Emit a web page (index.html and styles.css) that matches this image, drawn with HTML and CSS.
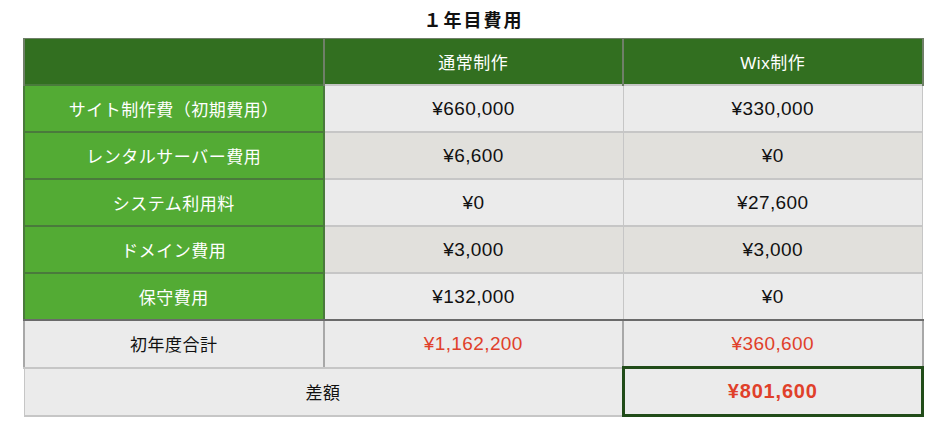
FILE: index.html
```html
<!DOCTYPE html>
<html lang="ja">
<head>
    <meta charset="UTF-8">
    <meta name="viewport" content="width=device-width, initial-scale=1.0">
    <title>1年目費用</title>
    <link rel="stylesheet" href="styles.css">
</head>
<body>
    <div class="container">
        <h2 class="title">１年目費用</h2>
        <table class="cost-table">
            <thead>
                <tr>
                    <th></th>
                    <th>通常制作</th>
                    <th>Wix制作</th>
                </tr>
            </thead>
            <tbody>
                <tr>
                    <th class="item">サイト制作費（初期費用）</th>
                    <td class="num">¥660,000</td>
                    <td class="num">¥330,000</td>
                </tr>
                <tr class="alt">
                    <th class="item">レンタルサーバー費用</th>
                    <td class="num">¥6,600</td>
                    <td class="num">¥0</td>
                </tr>
                <tr>
                    <th class="item">システム利用料</th>
                    <td class="num">¥0</td>
                    <td class="num">¥27,600</td>
                </tr>
                <tr class="alt">
                    <th class="item">ドメイン費用</th>
                    <td class="num">¥3,000</td>
                    <td class="num">¥3,000</td>
                </tr>
                <tr class="last-item">
                    <th class="item">保守費用</th>
                    <td class="num">¥132,000</td>
                    <td class="num">¥0</td>
                </tr>
                <tr class="total">
                    <td>初年度合計</td>
                    <td class="num red">¥1,162,200</td>
                    <td class="num red">¥360,600</td>
                </tr>
                <tr class="diff">
                    <td colspan="2">差額</td>
                    <td class="num highlight">¥801,600</td>
                </tr>
            </tbody>
        </table>
    </div>
</body>
</html>
```

FILE: styles.css
```css
body {
    font-family: "Liberation Sans", "Noto Sans CJK JP", sans-serif;
    background-color: #fff;
    color: #111;
    margin: 0;
    padding: 0;
}
.container {
    width: 901px;
    margin: 0 0 0 23px;
    padding-top: 8px;
}
.title {
    text-align: center;
    font-size: 18px;
    font-weight: bold;
    letter-spacing: 2px;
    line-height: 26px;
    margin: 0 0 4px 0;
}
.cost-table {
    width: 901px;
    border-collapse: collapse;
    table-layout: fixed;
    border: 1px solid #bcbcbc;
    font-size: 17px;
    letter-spacing: 0.5px;
}
.cost-table th,
.cost-table td {
    height: 45px;
    padding: 0;
    text-align: center;
    vertical-align: middle;
    font-weight: normal;
    border: 1px solid #c6c6c6;
    border-width: 2px 1px;
    background-color: #ebebeb;
}
.cost-table td.num {
    font-size: 19px;
    letter-spacing: 0.4px;
}
.cost-table thead th {
    background-color: #326f20;
    color: #fff;
    border-color: #6f7f68;
    border-width: 1px 2px;
}
.cost-table th.item {
    background-color: #53ab34;
    color: #fff;
    border-color: #4a7a3c;
    border-width: 2px 2px;
}
.cost-table tr.alt td {
    background-color: #e1e0dc;
}
.cost-table tr.last-item th,
.cost-table tr.last-item td {
    border-bottom: 2px solid #6a6a6a;
}
.cost-table tr.total td {
    border-left: 2px solid #a8a8a8;
    border-right: 2px solid #a8a8a8;
}
.red {
    color: #e0402a;
}
.cost-table td.highlight {
    border: 3px solid #214c19;
    color: #e0402a;
    font-weight: bold;
    font-size: 20px;
    letter-spacing: 0.8px;
}
```
